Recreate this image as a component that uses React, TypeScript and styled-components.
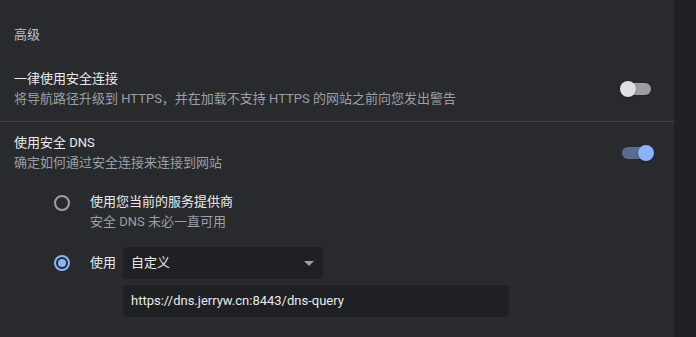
import styled, { createGlobalStyle } from "styled-components";

const GlobalStyle = createGlobalStyle`
  html, body {
    margin: 0;
    padding: 0;
    background: #202124;
  }
  body {
    font-family: Roboto, "Noto Sans CJK SC", sans-serif;
    font-size: 13px;
    -webkit-font-smoothing: antialiased;
  }
`;

function Toggle({ checked }: { checked: boolean }) {
  return (
    <ToggleWrap>
      <Track $on={checked} />
      <Knob $on={checked} />
    </ToggleWrap>
  );
}

function Radio({ checked }: { checked: boolean }) {
  return <RadioCircle $on={checked}>{checked && <RadioDot />}</RadioCircle>;
}

export default function App() {
  return (
    <>
      <GlobalStyle />
      <Page>
        <Card>
          <Heading>高级</Heading>

          <SettingRow>
            <RowText>
              <Title>一律使用安全连接</Title>
              <Sub>
                将导航路径升级到 HTTPS，并在加载不支持 HTTPS 的网站之前向您发出警告
              </Sub>
            </RowText>
            <Toggle checked={false} />
          </SettingRow>

          <Divider />

          <SettingRow>
            <RowText>
              <Title>使用安全 DNS</Title>
              <Sub>确定如何通过安全连接来连接到网站</Sub>
            </RowText>
            <Toggle checked />
          </SettingRow>

          <Options>
            <Option>
              <Radio checked={false} />
              <RowText>
                <Title>使用您当前的服务提供商</Title>
                <Sub>安全 DNS 未必一直可用</Sub>
              </RowText>
            </Option>

            <CustomOption>
              <OptionHead>
                <Radio checked />
                <Title>使用</Title>
                <Select>
                  <span>自定义</span>
                  <Caret />
                </Select>
              </OptionHead>
              <UrlInput>https://dns.jerryw.cn:8443/dns-query</UrlInput>
            </CustomOption>
          </Options>
        </Card>
        <Gutter />
      </Page>
    </>
  );
}

/* ─── Styled Components ─────────────────────────── */

const Page = styled.div`
  display: flex;
  width: 696px;
  height: 337px;
  overflow: hidden;
  background: #202124;
`;

const Card = styled.div`
  width: 674px;
  flex-shrink: 0;
  background: #292a2d;
  display: flex;
  flex-direction: column;
`;

const Gutter = styled.div`
  flex: 1;
  background: #202124;
`;

const Heading = styled.div`
  padding: 26px 14px 14px;
  line-height: 18px;
  color: #bdc1c6;
`;

const SettingRow = styled.div`
  display: flex;
  align-items: center;
  justify-content: space-between;
  padding: 11px 20px 13px 14px;
`;

const RowText = styled.div`
  display: flex;
  flex-direction: column;
`;

const Title = styled.span`
  line-height: 20px;
  color: #e8eaed;
  white-space: nowrap;
`;

const Sub = styled.span`
  line-height: 20px;
  color: #9aa0a6;
  white-space: nowrap;
`;

const Divider = styled.div`
  height: 1px;
  background: #3f4042;
  margin-top: -1px;
`;

const ToggleWrap = styled.div`
  position: relative;
  width: 34px;
  height: 16px;
  flex-shrink: 0;
`;

const Track = styled.div<{ $on: boolean }>`
  position: absolute;
  left: 2px;
  right: 3px;
  top: 2px;
  height: 12px;
  border-radius: 6px;
  background: ${({ $on }) => ($on ? "#5b6c91" : "#9b9ea4")};
`;

const Knob = styled.div<{ $on: boolean }>`
  position: absolute;
  top: 0;
  left: ${({ $on }) => ($on ? "18px" : "0")};
  width: 16px;
  height: 16px;
  border-radius: 50%;
  background: ${({ $on }) => ($on ? "#8ab4f8" : "#dfe0e3")};
  box-shadow: 0 1px 2px rgba(0, 0, 0, 0.35);
`;

const Options = styled.div`
  display: flex;
  flex-direction: column;
  gap: 15px;
  padding-left: 54px;
`;

const Option = styled.div`
  display: flex;
  align-items: flex-start;
  gap: 20px;
  padding-top: 6px;

  & > div:first-child {
    margin-top: 3px;
  }
`;

const CustomOption = styled.div`
  display: flex;
  flex-direction: column;
  gap: 6px;
`;

const OptionHead = styled.div`
  display: flex;
  align-items: center;
  gap: 20px;

  & > span {
    margin-right: -13px;
  }
`;

const RadioCircle = styled.div<{ $on: boolean }>`
  box-sizing: border-box;
  width: 16px;
  height: 16px;
  border-radius: 50%;
  border: 2px solid ${({ $on }) => ($on ? "#8ab4f8" : "#9aa0a6")};
  display: flex;
  align-items: center;
  justify-content: center;
  flex-shrink: 0;
`;

const RadioDot = styled.div`
  width: 8px;
  height: 8px;
  border-radius: 50%;
  background: #8ab4f8;
`;

const Select = styled.div`
  box-sizing: border-box;
  width: 200px;
  height: 32px;
  border-radius: 4px;
  background: #1f2023;
  color: #e8eaed;
  display: flex;
  align-items: center;
  justify-content: space-between;
  padding: 0 9px 0 8px;
  line-height: 20px;
`;

const Caret = styled.span`
  width: 0;
  height: 0;
  border-left: 5px solid transparent;
  border-right: 5px solid transparent;
  border-top: 5px solid #9aa0a6;
`;

const UrlInput = styled.div`
  box-sizing: border-box;
  width: 386px;
  height: 32px;
  margin-left: 69px;
  border-radius: 4px;
  background: #1f2023;
  color: #e8eaed;
  display: flex;
  align-items: center;
  padding: 0 8px;
  line-height: 20px;
`;
